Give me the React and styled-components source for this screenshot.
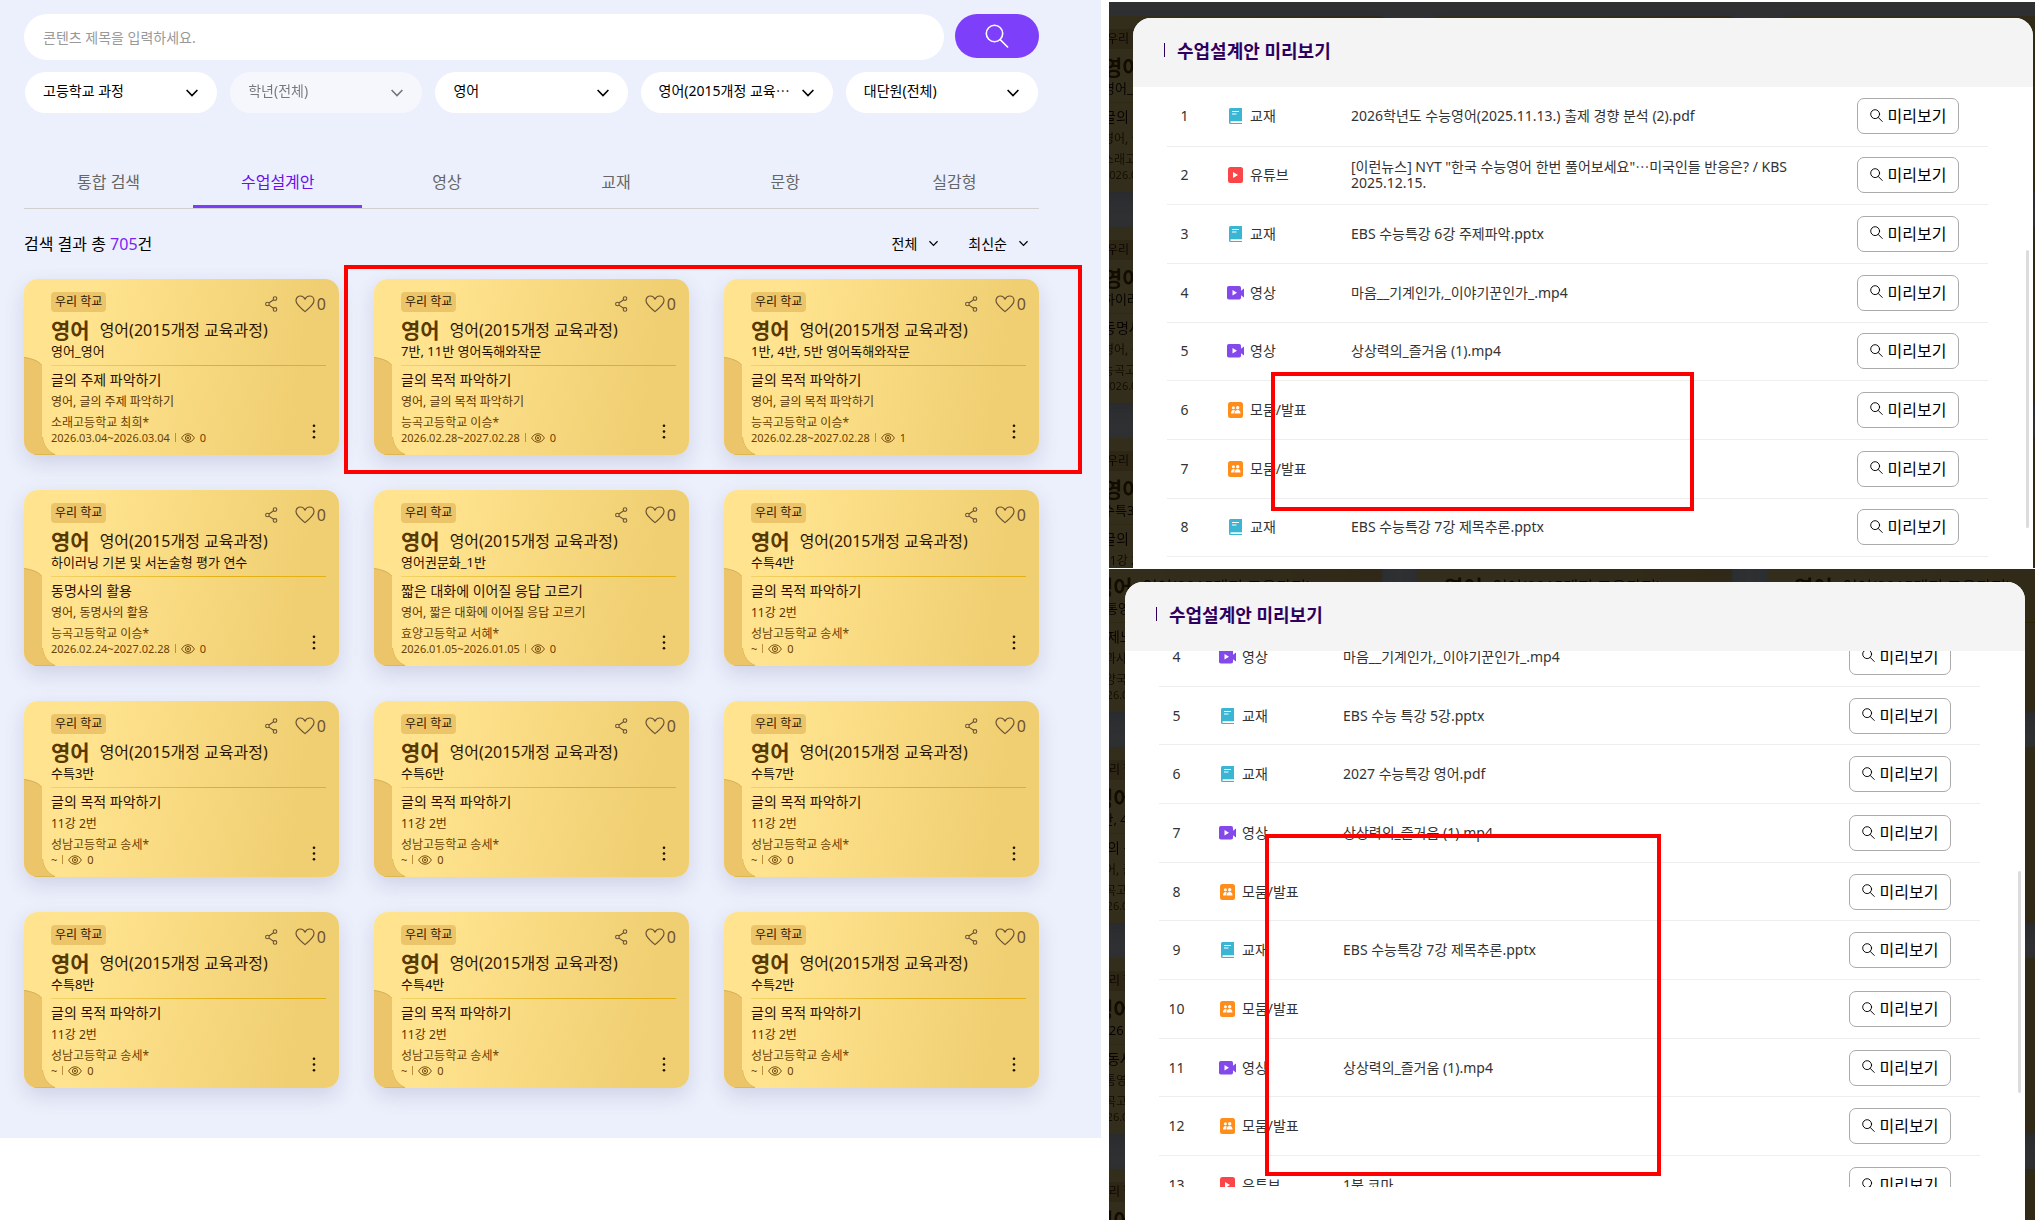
import styled, { createGlobalStyle } from 'styled-components';

const FONT = `"Noto Sans", "Noto Sans CJK KR", sans-serif`;

const TABS = ['통합 검색', '수업설계안', '영상', '교재', '문항', '실감형'];

const FILTERS = [
    { label: '학교급', value: '고등학교 과정' },
    { label: '학년', value: '학년(전체)', disabled: true },
    { label: '과목', value: '영어' },
    { label: '교육과정', value: '영어(2015개정 교육⋯' },
    { label: '단원', value: '대단원(전체)' },
];

const plan = (name, title, desc, school, period, views = 0) => ({ name, title, desc, school, period, views });

const PURPOSE = '글의 목적 파악하기';
const SUNGNAM = '성남고등학교 송세*';

const PLANS = [
    plan('영어_영어', '글의 주제 파악하기', '영어, 글의 주제 파악하기', '소래고등학교 최희*', '2026.03.04~2026.03.04'),
    plan('7반, 11반 영어독해와작문', PURPOSE, '영어, 글의 목적 파악하기', '능곡고등학교 이승*', '2026.02.28~2027.02.28'),
    plan('1반, 4반, 5반 영어독해와작문', PURPOSE, '영어, 글의 목적 파악하기', '능곡고등학교 이승*', '2026.02.28~2027.02.28', 1),
    plan('하이러닝 기본 및 서논술형 평가 연수', '동명사의 활용', '영어, 동명사의 활용', '능곡고등학교 이승*', '2026.02.24~2027.02.28'),
    plan('영어권문화_1반', '짧은 대화에 이어질 응답 고르기', '영어, 짧은 대화에 이어질 응답 고르기', '효양고등학교 서혜*', '2026.01.05~2026.01.05'),
    plan('수특4반', PURPOSE, '11강 2번', SUNGNAM, '~'),
    plan('수특3반', PURPOSE, '11강 2번', SUNGNAM, '~'),
    plan('수특6반', PURPOSE, '11강 2번', SUNGNAM, '~'),
    plan('수특7반', PURPOSE, '11강 2번', SUNGNAM, '~'),
    plan('수특8반', PURPOSE, '11강 2번', SUNGNAM, '~'),
    plan('수특4반', PURPOSE, '11강 2번', SUNGNAM, '~'),
    plan('수특2반', PURPOSE, '11강 2번', SUNGNAM, '~'),
];

/* null is a card that stays fully behind the modal */
const FIRST_BACKDROP = [PLANS[0], null, null, PLANS[3], null, null, PLANS[6], null, null];

const COMMON = plan('공통영어', '문제느낌', '영과사전', '안양국제고등학교', '2026.03.04~2026.03.04');

const SECOND_BACKDROP = [
    COMMON,
    COMMON,
    COMMON,
    PLANS[2],
    null,
    null,
    plan('2026 영어', '부동사의 활용', '공통영어', '능곡고등학교 이승*', '2026.02.24~2027.02.28'),
    null,
    null,
    PLANS[9],
    null,
    null,
];

const BOOK = 'book';
const TUBE = 'tube';
const VIDEO = 'video';
const GROUP = 'group';

const TYPE_NAMES = { [BOOK]: '교재', [TUBE]: '유튜브', [VIDEO]: '영상', [GROUP]: '모둠/발표' };

const FIRST_ROWS = [
    [1, BOOK, '2026학년도 수능영어(2025.11.13.) 출제 경향 분석 (2).pdf'],
    [2, TUBE, '[이런뉴스] NYT "한국 수능영어 한번 풀어보세요"⋯미국인들 반응은? / KBS 2025.12.15.'],
    [3, BOOK, 'EBS 수능특강 6강 주제파악.pptx'],
    [4, VIDEO, '마음__기계인가,_이야기꾼인가_.mp4'],
    [5, VIDEO, '상상력의_즐거움 (1).mp4'],
    [6, GROUP, ''],
    [7, GROUP, ''],
    [8, BOOK, 'EBS 수능특강 7강 제목추론.pptx'],
];

const SECOND_ROWS = [
    [4, VIDEO, '마음__기계인가,_이야기꾼인가_.mp4'],
    [5, BOOK, 'EBS 수능 특강 5강.pptx'],
    [6, BOOK, '2027 수능특강 영어.pdf'],
    [7, VIDEO, '상상력의_즐거움 (1).mp4'],
    [8, GROUP, ''],
    [9, BOOK, 'EBS 수능특강 7강 제목추론.pptx'],
    [10, GROUP, ''],
    [11, VIDEO, '상상력의_즐거움 (1).mp4'],
    [12, GROUP, ''],
    [13, TUBE, '1분 코마'],
];

const SearchIcon = ({ size, width }) => (
    <svg width={size} height={size} viewBox="0 0 24 24" fill="none" stroke="currentColor" strokeWidth={width} strokeLinecap="round">
        <circle cx="9.5" cy="9.5" r="8.2" />
        <path d="M15.2 15.6 22.6 23" />
    </svg>
);

const Chevron = ({ size = 12 }) => (
    <svg width={size} height={size} viewBox="0 0 12 12" fill="none" stroke="currentColor" strokeWidth="1.6">
        <path d="M.6 3 6 8.6 11.4 3" />
    </svg>
);

const ShareIcon = () => (
    <svg width="13" height="16" viewBox="0 0 13 16" fill="none" stroke="currentColor" strokeWidth="1.1">
        <circle cx="10" cy="2.6" r="1.8" />
        <circle cx="2.4" cy="8" r="1.8" />
        <circle cx="10" cy="13.4" r="1.8" />
        <path d="M8.6 3.7 3.9 7M3.9 9.1l4.7 3.2" />
    </svg>
);

const HeartIcon = () => (
    <svg width="20" height="18" viewBox="0 0 20 18" fill="none" stroke="currentColor" strokeWidth="1.2" strokeLinejoin="round">
        <path d="M10 16.6C7 13.8 1 10 1 5.6 1 2.9 3 1 5.4 1 7.6 1 9.2 2.3 10 4.2 10.8 2.3 12.4 1 14.6 1 17 1 19 2.9 19 5.6c0 4.4-6 8.2-9 11z" />
    </svg>
);

const EyeIcon = () => (
    <svg width="14" height="10" viewBox="0 0 14 10" fill="none" stroke="currentColor" strokeWidth=".9">
        <path d="M.6 5C2.2 2.2 4.4.8 7 .8S11.8 2.2 13.4 5C11.8 7.8 9.600 9.200 7 9.200S2.200 7.800.6 5z" />
        <circle cx="7" cy="5" r="2.600" />
        <circle cx="7" cy="5" r=".8" />
    </svg>
);

const KebabIcon = () => (
    <svg width="4" height="15" viewBox="0 0 4 15" fill="currentColor">
        <circle cx="2" cy="1.8" r="1.3" />
        <circle cx="2" cy="7.5" r="1.3" />
        <circle cx="2" cy="13.2" r="1.3" />
    </svg>
);

const FolderEdge = () => (
    <FolderSvg width="34" height="98" viewBox="0 0 34 98">
        <path d="M0 0C7 1 14 3 18 8V80C19 89 24 95 32 98H0z" fill="#ecc56b" />
        <path d="M0 .5C7 1.500 14 3.500 17.500 8" fill="none" stroke="#d3b25c" />
        <path d="M18.500 80C19.500 89 24 94.500 31 97.500H10" fill="none" stroke="#dcb84f" />
    </FolderSvg>
);

const TypeIcon = ({ type }) => (
    <svg width="17" height="16" viewBox="0 0 17 16">
        {type === BOOK && (
            <>
                <path d="M3.500 0H15v16H3.500A1.500 1.500 0 0 1 2 14.500v-13A1.500 1.500 0 0 1 3.500 0z" fill="#3ab5d3" />
                <path d="M3.500 13.300H15v1.600H3.500z" fill="#fff" />
                <path d="M5 3.500h7M5 6h4.500" stroke="#fff" strokeWidth="1.200" />
            </>
        )}
        {type === TUBE && (
            <>
                <rect x="1" width="15" height="16" rx="2.500" fill="#fb4649" />
                <path d="M6 5v6l5-3z" fill="#fff" />
            </>
        )}
        {type === VIDEO && (
            <>
                <rect y="1" width="14" height="13.500" rx="1.800" fill="#8449eb" />
                <path d="M13 6.500 17 3.500v9l-4-3z" fill="#8449eb" />
                <path d="M5.500 5v5.500L10 7.750z" fill="#fff" />
            </>
        )}
        {type === GROUP && (
            <>
                <rect x="1" width="15" height="16" rx="2.500" fill="#ff8d1c" />
                <circle cx="6.400" cy="5.800" r="1.500" fill="#fff" />
                <circle cx="10.700" cy="5.800" r="1.700" fill="#fff" />
                <path d="M4 11.500c0-2 1-3.600 2.400-3.600.7 0 1.200.3 1.500.8-.8.800-1.200 1.700-1.200 2.800zM7.400 11.500c0-2.200 1.400-3.600 3.300-3.600s2.800 1.400 2.800 3.600z" fill="#fff" />
            </>
        )}
    </svg>
);

const PlanCard = ({ item }) => (
    <Card>
        <FolderEdge />
        <CardTop>
            <Badge>우리 학교</Badge>
            <Actions>
                <IconButton type="button" aria-label="공유">
                    <ShareIcon />
                </IconButton>
                <IconButton type="button" aria-label="좋아요">
                    <HeartIcon />
                    <span>0</span>
                </IconButton>
            </Actions>
        </CardTop>
        <Subject>
            <strong>영어</strong>
            <span>영어(2015개정 교육과정)</span>
        </Subject>
        <PlanName>{item.name}</PlanName>
        <Unit>{item.title}</Unit>
        <Desc>{item.desc}</Desc>
        <CardBottom>
            <div>
                <School>{item.school}</School>
                <Meta>
                    <span>{item.period}</span>
                    <Bar />
                    <EyeIcon />
                    <span>{item.views}</span>
                </Meta>
            </div>
            <MoreButton type="button" aria-label="더보기">
                <KebabIcon />
            </MoreButton>
        </CardBottom>
    </Card>
);

const DimmedPlans = ({ items, top, left }) => (
    <Backdrop $top={top} $left={left} aria-hidden="true">
        <CardGrid>{items.map((item, i) => (item ? <PlanCard key={i} item={item} /> : <Card key={i} />))}</CardGrid>
    </Backdrop>
);

const PlanModal = ({ rows, scrolled, children }) => (
    <Modal>
        <ModalHeader>
            <ModalTitle>수업설계안 미리보기</ModalTitle>
        </ModalHeader>
        <ModalBody $scrolled={scrolled}>
            <Table $scrolled={scrolled}>
                <tbody>
                    {rows.map(([no, type, title]) => (
                        <tr key={no}>
                            <NoCell>{no}</NoCell>
                            <TypeCell>
                                <TypeLabel>
                                    <TypeIcon type={type} />
                                    {TYPE_NAMES[type]}
                                </TypeLabel>
                            </TypeCell>
                            <td>{title}</td>
                            <ActionCell>
                                <PreviewButton type="button">
                                    <SearchIcon size={13} width={1.8} />
                                    미리보기
                                </PreviewButton>
                            </ActionCell>
                        </tr>
                    ))}
                </tbody>
            </Table>
        </ModalBody>
        {children}
    </Modal>
);

const App = () => (
    <>
        <GlobalStyle />
        <Page>
            <SearchPanel>
                <SearchForm onSubmit={(e) => e.preventDefault()}>
                    <SearchInput aria-label="콘텐츠 제목" placeholder="콘텐츠 제목을 입력하세요." />
                    <SearchButton aria-label="검색">
                        <SearchIcon size={24} width={1.6} />
                    </SearchButton>
                </SearchForm>
                <Filters>
                    {FILTERS.map(({ label, value, disabled }) => (
                        <FilterBox key={label} $disabled={disabled}>
                            <select aria-label={label} disabled={disabled}>
                                <option>{value}</option>
                            </select>
                            <Chevron />
                        </FilterBox>
                    ))}
                </Filters>
                <Tabs>
                    {TABS.map((tab) => (
                        <Tab key={tab} type="button" $active={tab === '수업설계안'}>
                            {tab}
                        </Tab>
                    ))}
                </Tabs>
                <ResultBar>
                    <ResultCount>
                        검색 결과 총 <em>705</em>건
                    </ResultCount>
                    <Sorts>
                        <SortButton type="button">
                            전체 <Chevron size={9} />
                        </SortButton>
                        <SortButton type="button">
                            최신순 <Chevron size={9} />
                        </SortButton>
                    </Sorts>
                </ResultBar>
                <CardGrid>
                    {PLANS.map((item, i) => (
                        <PlanCard key={i} item={item} />
                    ))}
                </CardGrid>
                <Marker $top={265} $left={344} $width={738} $height={209} />
            </SearchPanel>
            <Screens>
                <FirstScreen>
                    <DimmedPlans items={FIRST_BACKDROP} top={14} left={-33} />
                    <PlanModal rows={FIRST_ROWS}>
                        <ScrollThumb $top={232} $height={278} />
                    </PlanModal>
                    <Marker $top={370} $left={162} $width={423} $height={139} />
                </FirstScreen>
                <SecondScreen>
                    <DimmedPlans items={SECOND_BACKDROP} top={-33} left={-42} />
                    <PlanModal rows={SECOND_ROWS} scrolled>
                        <ScrollThumb $top={289} $height={222} />
                    </PlanModal>
                    <Marker $top={265} $left={156} $width={396} $height={342} />
                </SecondScreen>
            </Screens>
        </Page>
    </>
);

export default App;

const GlobalStyle = createGlobalStyle`
    * {
        box-sizing: border-box;
    }

    body {
        margin: 0;
        background: #fff;
        color: #000;
        font-family: ${FONT};
    }

    button, input, select {
        font-family: inherit;
        color: inherit;
    }

    button {
        padding: 0;
        border: 0;
        background: none;
        cursor: pointer;
    }

    h2, h3, p {
        margin: 0;
        font-weight: 400;
    }

    svg {
        display: block;
        flex-shrink: 0;
    }
`;

const Page = styled.main`
    display: grid;
    grid-template-columns: 1101fr 926fr;
    column-gap: 8px;
    align-items: start;
`;

const SearchPanel = styled.section`
    position: relative;
    min-width: 0;
    padding: 14px 62px 50px 24px;
    background: #ecf0fc;
`;

const SearchForm = styled.form`
    display: flex;
    align-items: flex-start;
    gap: 11px;
`;

const SearchInput = styled.input`
    flex: 1;
    min-width: 0;
    height: 46px;
    padding: 0 19px;
    border: 0;
    border-radius: 23px;
    background: #fff;
    font-size: 14px;
    outline: none;

    &::placeholder {
        color: #999;
    }
`;

const SearchButton = styled.button`
    display: flex;
    justify-content: center;
    align-items: center;
    width: 84px;
    height: 44px;
    border-radius: 22px;
    background: #7e3ffb;
    color: #fff;
`;

const Filters = styled.div`
    display: grid;
    grid-template-columns: repeat(5, 1fr);
    gap: 13px;
    margin-top: 12px;
    padding: 0 1px;
`;

const FilterBox = styled.div`
    display: grid;
    align-items: center;
    height: 41px;
    border-radius: 21px;
    background: #fff;
    opacity: ${({ $disabled }) => ($disabled ? 0.5 : 1)};

    select {
        grid-area: 1 / 1;
        width: 100%;
        height: 41px;
        padding: 0 36px 4px 18px;
        border: 0;
        background: none;
        appearance: none;
        font-size: 14px;
        opacity: 1;
    }

    svg {
        grid-area: 1 / 1;
        justify-self: end;
        margin-right: 19px;
        pointer-events: none;
    }
`;

const Tabs = styled.nav`
    display: grid;
    grid-template-columns: repeat(6, 1fr);
    margin-top: 43px;
    border-bottom: 1px solid #d0d0d0;
`;

const Tab = styled.button`
    height: 52px;
    border-bottom: 3px solid ${({ $active }) => ($active ? '#7c3cf8' : 'transparent')};
    color: ${({ $active }) => ($active ? '#6a11ee' : '#666')};
    font-size: 16px;
`;

const ResultBar = styled.div`
    display: flex;
    justify-content: space-between;
    align-items: center;
    height: 70px;
    padding-bottom: 2px;
`;

const ResultCount = styled.p`
    font-size: 16px;

    em {
        color: #7a1ff5;
        font-style: normal;
    }
`;

const Sorts = styled.div`
    display: flex;
    gap: 30px;
    padding-right: 11px;
`;

const SortButton = styled.button`
    display: flex;
    align-items: center;
    gap: 12px;
    font-size: 14px;
`;

const CardGrid = styled.div`
    display: grid;
    grid-template-columns: repeat(3, 1fr);
    gap: 35px;
`;

const Card = styled.article`
    position: relative;
    overflow: hidden;
    min-width: 0;
    height: 176px;
    padding: 13px 13px 10px 27px;
    border-radius: 14px;
    background: linear-gradient(100deg, #ffe38e 20%, #f0cf72 85%);
    box-shadow: 0 8px 20px rgba(90, 90, 140, 0.2);
    white-space: nowrap;
`;

const FolderSvg = styled.svg`
    position: absolute;
    left: 0;
    bottom: 0;
`;

const CardTop = styled.div`
    display: flex;
    justify-content: space-between;
    align-items: flex-start;
    height: 24px;
`;

const Badge = styled.span`
    padding: 0 4px;
    border-radius: 4px;
    background: #ecc56b;
    color: #2d1600;
    font-size: 12px;
    line-height: 20px;
`;

const Actions = styled.div`
    display: flex;
    gap: 17px;
    height: 24px;
    color: #6b5233;
`;

const IconButton = styled.button`
    display: flex;
    align-items: center;
    gap: 2px;
    font-size: 16px;
    line-height: 24px;
`;

const Subject = styled.h3`
    display: flex;
    align-items: center;
    gap: 10px;
    height: 26px;
    color: #2d1600;
    font-size: 16px;

    strong {
        color: #593900;
        font-size: 21px;
        font-weight: 700;
    }
`;

const PlanName = styled.p`
    padding-bottom: 5px;
    border-bottom: 1px solid;
    border-image: linear-gradient(90deg, #f3d368, #e5b112 60%) 1;
    color: #1b1000;
    font-size: 13px;
    line-height: 18px;
`;

const Unit = styled.p`
    margin-top: 5px;
    color: #2d1000;
    font-size: 14px;
    line-height: 18px;
`;

const Desc = styled.p`
    margin-top: 5px;
    color: #5b3200;
    font-size: 12px;
    line-height: 16px;
`;

const CardBottom = styled.div`
    display: flex;
    justify-content: space-between;
    align-items: flex-end;
    margin-top: 5px;
    color: #6a3f00;
`;

const School = styled.p`
    font-size: 12px;
    line-height: 15px;
`;

const Meta = styled.p`
    display: flex;
    align-items: center;
    gap: 5px;
    font-size: 11px;
    line-height: 15px;
`;

const Bar = styled.i`
    width: 1px;
    height: 9px;
    background: #b98f3c;
`;

const MoreButton = styled.button`
    display: flex;
    justify-content: center;
    align-items: center;
    width: 24px;
    height: 28px;
    color: #1b1000;
`;

const Screens = styled.div`
    display: grid;
    row-gap: 1px;
    min-width: 0;
    padding-top: 2px;
`;

const Screen = styled.section`
    position: relative;
    overflow: hidden;
    background: #2f3032;
`;

const FirstScreen = styled(Screen)`
    padding: 16px 2px 0 24px;
`;

const SecondScreen = styled(Screen)`
    padding: 13px 10px 0 16px;
`;

/* dimmed list behind a modal, cut off by the edges of its screen */
const Backdrop = styled.div`
    position: absolute;
    top: ${({ $top }) => $top}px;
    left: ${({ $left }) => $left}px;
    width: 1015px;
    filter: brightness(0.2);
`;

const Modal = styled.div`
    position: relative;
    overflow: hidden;
    border-radius: 18px 18px 0 0;
    background: #fff;
`;

const ModalHeader = styled.header`
    display: flex;
    align-items: center;
    height: 69px;
    padding: 0 31px 5px;
    background: #f4f4f4;
`;

const ModalTitle = styled.h2`
    display: flex;
    align-items: center;
    gap: 12px;
    color: #2d0060;
    font-size: 18px;
    font-weight: 600;

    &::before {
        content: '';
        width: 1px;
        height: 14px;
        background: #2d0060;
    }
`;

const ModalBody = styled.div`
    overflow: hidden;
    height: ${({ $scrolled }) => ($scrolled ? '536px' : 'auto')};
    margin-bottom: ${({ $scrolled }) => ($scrolled ? 33 : 11)}px;
    padding: 0 45px 0 34px;
`;

const Table = styled.table`
    width: 100%;
    margin-top: ${({ $scrolled }) => ($scrolled ? -23 : 0)}px;
    border-collapse: collapse;
    table-layout: fixed;
    color: #333;
    font-size: 14px;
    line-height: 16px;

    tr {
        height: 59px;
    }

    tr:nth-child(3n + 2) {
        height: 58px;
    }

    td {
        padding: 0;
        border-bottom: 1px solid #eee;
    }
`;

const NoCell = styled.td`
    width: 35px;
    text-align: center;
`;

const TypeCell = styled.td`
    width: 149px;
`;

const TypeLabel = styled.div`
    display: flex;
    align-items: center;
    gap: 6px;
    padding-left: 25px;
`;

const ActionCell = styled.td`
    width: 140px;
`;

const PreviewButton = styled.button`
    display: flex;
    justify-content: center;
    align-items: center;
    gap: 5px;
    width: 102px;
    height: 36px;
    margin: 0 29px 0 auto;
    padding-bottom: 2px;
    border: 1px solid #aaa;
    border-radius: 7px;
    color: #000;
    font-size: 16px;
`;

const ScrollThumb = styled.i`
    position: absolute;
    top: ${({ $top }) => $top}px;
    right: 4px;
    width: 3px;
    height: ${({ $height }) => $height}px;
    border-radius: 2px;
    background: #dcdcdc;
`;

const Marker = styled.div`
    position: absolute;
    top: ${({ $top }) => $top}px;
    left: ${({ $left }) => $left}px;
    width: ${({ $width }) => $width}px;
    height: ${({ $height }) => $height}px;
    border: 4px solid #f00;
    pointer-events: none;
`;
